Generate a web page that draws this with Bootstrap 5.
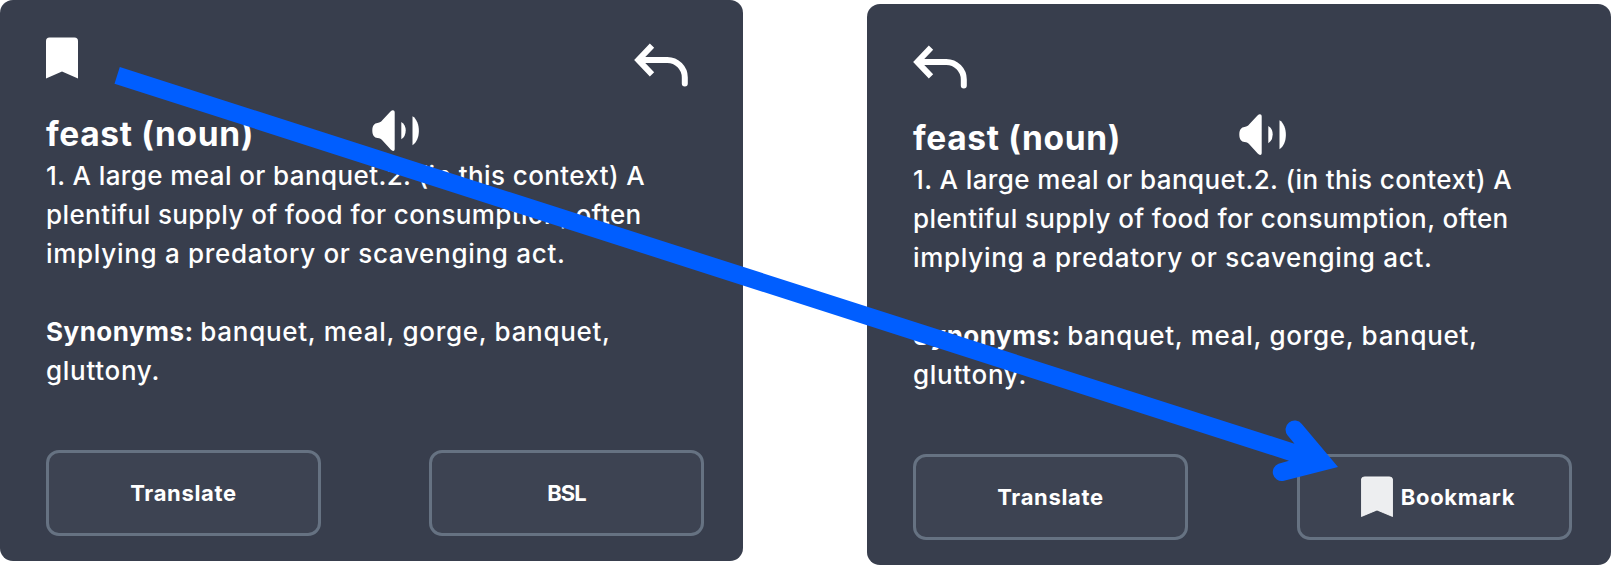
<!DOCTYPE html>
<html lang="en">
<head>
<meta charset="utf-8">
<meta name="viewport" content="width=device-width, initial-scale=1">
<title>Dictionary card</title>
<link href="https://cdn.jsdelivr.net/npm/bootstrap@5.3.0/dist/css/bootstrap.min.css" rel="stylesheet">
<style>
  body { background: #fff; font-family: Inter, "Open Sans", sans-serif; overflow: hidden; }
  .board { width: 1611px; height: 565px; }
  .word-card { width: 743px; height: 561px; padding: 37px 39px 25.5px 46px; background: #383e4d; border-radius: 13px; color: #fff; }
  .word-card.moved { width: 744px; padding-right: 39px; }
  .card-top { height: 71px; padding-right: 16px; }
  .moved .card-top { padding-top: 3.5px; }
  .back { margin-top: 6px; }
  .moved .back { margin-top: 0; }
  .term { height: 48px; }
  .term h1 { width: 326px; font-size: 33.5px; font-weight: 700; line-height: 48px; letter-spacing: .65px; padding-top: 2px; }
  .term svg { margin-top: 2px; }
  .meaning { font-size: 26px; font-weight: 500; line-height: 39.1px; white-space: nowrap; letter-spacing: .7px; }
  .meaning b { font-weight: 700; letter-spacing: .5px; margin-right: -1px; }
  .meaning .snug { letter-spacing: .4px; }
  .action { width: 275px; height: 85.5px; border: 3px solid #667282; border-radius: 13px; background: #3d4352; color: #fff; font-size: 22px; font-weight: 700; letter-spacing: .65px; padding: 1px 0 0; }
  .action.abbr { letter-spacing: -.9px; }
  .action.marked { padding-left: 7px; }
  .pointer { left: 0; top: 0; pointer-events: none; }
</style>
</head>
<body>
<main class="board position-relative d-flex justify-content-between">
  <section class="word-card d-flex flex-column">
    <div class="card-top d-flex justify-content-between align-items-start">
      <svg width="32" height="42" viewBox="0 0 32 42"><path fill="#fff" d="M0 41.500V4Q0 .500 3.500 .500H28.500Q32 .500 32 4V41.500L16 34.500Z"/></svg>
      <svg class="back" width="54" height="45" viewBox="0 0 54 45" fill="none" stroke="#fff" stroke-width="6"><path d="M18 2.700 4.300 17 18 31.300"/><path d="M6 17H33.300C43 17 50.800 25 50.800 34.500V40.500" stroke-linecap="round"/></svg>
    </div>
    <div class="term d-flex">
      <h1 class="mb-0">feast (noun)</h1>
      <svg width="48" height="42" viewBox="0 0 48 42" fill="#fff"><path d="M.300 20.500C.300 15.500 2.500 13.200 5.500 12.900 8 12.600 9 12 10.500 10L18.500 1.500C20.500-.500 22.700 0 22.700 2.500V39C22.700 41.500 20.500 41.500 18.700 39.500L10.500 30.500C9.200 28.700 8 28.200 5.500 28 2.500 27.700.300 25.500.300 20.500Z"/><path d="M29.300 12Q33.700 14.500 33.700 20.500 33.700 26.500 29.300 29.300Z"/><path d="M40.500 6.300C49 11.500 49 30 40.500 35.200Z"/></svg>
    </div>
    <div class="meaning">
      <span class="snug">1. A large meal or banquet.2. (in this context) A</span><br>
      <span class="snug">plentiful supply of food for consumption, often</span><br>
      implying a predatory or scavenging act.<br><br>
      <b>Synonyms:</b> banquet, meal, gorge, banquet,<br>
      gluttony.
    </div>
    <div class="mt-auto d-flex justify-content-between">
      <button class="btn action">Translate</button>
      <button class="btn action abbr">BSL</button>
    </div>
  </section>

  <section class="word-card moved d-flex flex-column align-self-end">
    <div class="card-top d-flex align-items-start">
      <svg class="back" width="54" height="45" viewBox="0 0 54 45" fill="none" stroke="#fff" stroke-width="6"><path d="M18 2.700 4.300 17 18 31.300"/><path d="M6 17H33.300C43 17 50.800 25 50.800 34.500V40.500" stroke-linecap="round"/></svg>
    </div>
    <div class="term d-flex">
      <h1 class="mb-0">feast (noun)</h1>
      <svg width="48" height="42" viewBox="0 0 48 42" fill="#fff"><path d="M.300 20.500C.300 15.500 2.500 13.200 5.500 12.900 8 12.600 9 12 10.500 10L18.500 1.500C20.500-.500 22.700 0 22.700 2.500V39C22.700 41.500 20.500 41.500 18.700 39.500L10.500 30.500C9.200 28.700 8 28.200 5.500 28 2.500 27.700.300 25.500.300 20.500Z"/><path d="M29.300 12Q33.700 14.500 33.700 20.500 33.700 26.500 29.300 29.300Z"/><path d="M40.500 6.300C49 11.500 49 30 40.500 35.200Z"/></svg>
    </div>
    <div class="meaning">
      <span class="snug">1. A large meal or banquet.2. (in this context) A</span><br>
      <span class="snug">plentiful supply of food for consumption, often</span><br>
      implying a predatory or scavenging act.<br><br>
      <b>Synonyms:</b> banquet, meal, gorge, banquet,<br>
      gluttony.
    </div>
    <div class="mt-auto d-flex justify-content-between">
      <button class="btn action">Translate</button>
      <button class="btn action marked d-flex align-items-center justify-content-center gap-2">
        <svg width="32" height="42" viewBox="0 0 32 42"><path fill="#edeef0" stroke="#fff" stroke-width=".8" d="M.400 40.500V4Q.400 .900 3.500 .900H28.500Q31.600 .900 31.600 4V40.500L16 34Z"/></svg>
        Bookmark
      </button>
    </div>
  </section>

  <!-- arrow linking the bookmark icon to its new place -->
  <svg class="pointer position-absolute" width="1611" height="565" viewBox="0 0 1611 565">
    <path fill="#005eff" d="M119.800 67 1294.500 443.700 1287.500 435.200A9 9 0 0 1 1301.800 424L1338 467 1283 481A9 9 0 0 1 1278.500 463.700L1289 460.700 114.500 83.700Z"/>
  </svg>
</main>
<script src="https://cdn.jsdelivr.net/npm/bootstrap@5.3.0/dist/js/bootstrap.bundle.min.js"></script>
</body>
</html>
